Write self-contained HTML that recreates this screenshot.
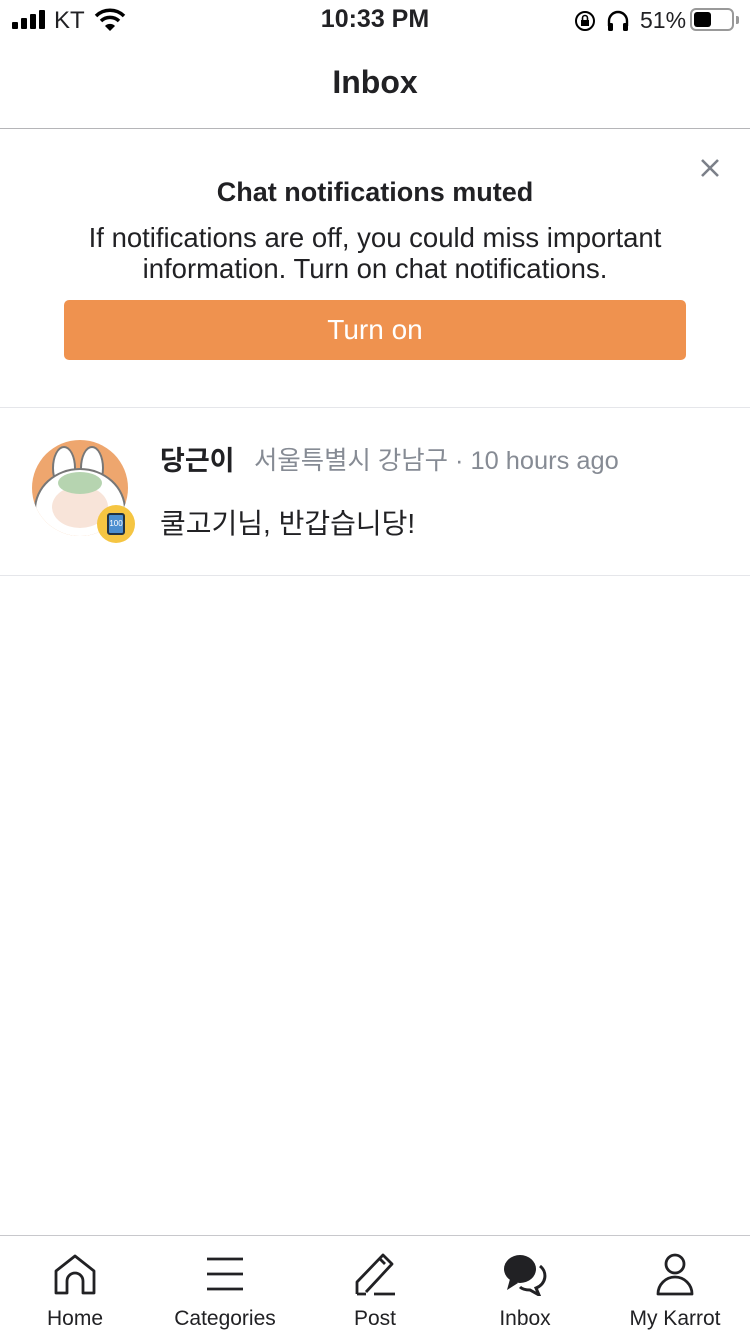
<!DOCTYPE html>
<html><head><meta charset="utf-8"><style>
*{margin:0;padding:0;box-sizing:border-box}
body{width:750px;height:1334px;background:#fff;font-family:"Liberation Sans","Noto Sans CJK KR",sans-serif;color:#212124;position:relative;overflow:hidden}
.abs{position:absolute}
</style></head><body>
<!-- status bar -->
<div class="abs" style="left:12px;top:9px;width:36px;height:22px">
<div class="abs" style="left:0;top:13px;width:6px;height:7px;background:#000;border-radius:1px"></div>
<div class="abs" style="left:9px;top:9px;width:6px;height:11px;background:#000;border-radius:1px"></div>
<div class="abs" style="left:18px;top:5px;width:6px;height:15px;background:#000;border-radius:1px"></div>
<div class="abs" style="left:27px;top:1px;width:6px;height:19px;background:#000;border-radius:1px"></div>
</div>
<div class="abs" style="left:54px;top:7px;font-size:24px">KT</div>
<svg class="abs" style="left:94px;top:8px" width="32" height="24" viewBox="0 0 32 24"><path d="M2 8a20 20 0 0 1 28 0" stroke="#000" stroke-width="3.5" fill="none"/><path d="M7 13a13 13 0 0 1 18 0" stroke="#000" stroke-width="3.5" fill="none"/><path d="M11 18l5 5 5-5a7 7 0 0 0-10 0z" fill="#000"/></svg>
<div class="abs" style="left:0;width:750px;top:5px;text-align:center;font-size:25px;font-weight:bold">10:33 PM</div>
<svg class="abs" style="left:574px;top:10px" width="22" height="22" viewBox="0 0 22 22"><circle cx="11" cy="11" r="9" stroke="#000" stroke-width="2" fill="none"/><rect x="7" y="10" width="8" height="6" fill="#000"/><path d="M8.5 10V8a2.5 2.5 0 0 1 5 0v2" stroke="#000" stroke-width="1.6" fill="none"/></svg>
<svg class="abs" style="left:606px;top:10px" width="24" height="22" viewBox="0 0 24 22"><path d="M3 16v-5a9 9 0 0 1 18 0v5" stroke="#000" stroke-width="2.4" fill="none"/><rect x="2" y="13" width="5" height="8" rx="1.5" fill="#000"/><rect x="17" y="13" width="5" height="8" rx="1.5" fill="#000"/></svg>
<div class="abs" style="left:640px;top:7px;font-size:23px">51%</div>
<div class="abs" style="left:690px;top:8px;width:44px;height:23px;border:2px solid #999;border-radius:6px"><div style="margin:2px;width:17px;height:15px;background:#000;border-radius:3px"></div></div>
<div class="abs" style="left:736px;top:16px;width:3px;height:8px;background:#999;border-radius:0 2px 2px 0"></div>
<!-- header -->
<div class="abs" style="left:0;width:750px;top:64px;text-align:center;font-size:32px;font-weight:bold">Inbox</div>
<div class="abs" style="left:0;top:128px;width:750px;height:1px;background:#b5b5b8"></div>
<!-- banner -->
<svg class="abs" style="left:700px;top:158px" width="20" height="20" viewBox="0 0 20 20"><path d="M2 2l16 16M18 2L2 18" stroke="#7c8089" stroke-width="2.6"/></svg>
<div class="abs" style="left:0;width:750px;top:177px;text-align:center;font-size:27px;font-weight:bold">Chat notifications muted</div>
<div class="abs" style="left:0;width:750px;top:222px;text-align:center;font-size:27.5px;line-height:31px;color:#212124">If notifications are off, you could miss important<br>information. Turn on chat notifications.</div>
<div class="abs" style="left:64px;top:300px;width:622px;height:60px;background:#ef924f;border-radius:5px;color:#fff;font-size:28px;text-align:center;line-height:60px">Turn on</div>
<div class="abs" style="left:0;top:407px;width:750px;height:1px;background:#e5e6ea"></div>
<!-- chat row -->
<div class="abs" style="left:32px;top:440px;width:96px;height:96px;border-radius:50%;background:#eea66e;overflow:hidden">
<div class="abs" style="left:20px;top:6px;width:24px;height:44px;border-radius:50%;background:#fff;border:2px solid #777"></div>
<div class="abs" style="left:48px;top:6px;width:24px;height:44px;border-radius:50%;background:#fff;border:2px solid #777"></div>
<div class="abs" style="left:2px;top:28px;width:92px;height:84px;border-radius:50%;background:#fff;border:2px solid #777"></div>
<div class="abs" style="left:20px;top:46px;width:56px;height:42px;border-radius:50%;background:#f8e4d9"></div>
<div class="abs" style="left:26px;top:32px;width:44px;height:22px;border-radius:50%;background:#b6d4b0"></div>
</div>
<div class="abs" style="left:97px;top:505px;width:38px;height:38px;border-radius:50%;background:#f5c542"><div style="margin:8px 10px;width:18px;height:22px;background:#4c8fd0;border:2px solid #234;border-radius:3px;font-size:8px;color:#fff;text-align:center;line-height:18px">100</div></div>
<div class="abs" style="left:160px;top:439px;font-size:27px;font-weight:bold">당근이</div>
<div class="abs" style="left:254px;top:441px;font-size:25.4px;color:#868b94">서울특별시 강남구 · 10 hours ago</div>
<div class="abs" style="left:160px;top:502px;font-size:28px">쿨고기님, 반갑습니당!</div>
<div class="abs" style="left:0;top:575px;width:750px;height:1px;background:#e5e6ea"></div>
<!-- tab bar -->
<div class="abs" style="left:0;top:1235px;width:750px;height:1px;background:#c8c8cc"></div>
<svg class="abs" style="left:53px;top:1253px" width="44" height="42" viewBox="0 0 44 42"><path d="M3 40V18L22 3l19 15v22H30V28a8 8 0 0 0-16 0v12z" stroke="#212124" stroke-width="2.8" fill="none" stroke-linejoin="round"/></svg>
<svg class="abs" style="left:206px;top:1257px" width="38" height="34" viewBox="0 0 38 34"><path d="M1 2h36M1 17h36M1 32h36" stroke="#212124" stroke-width="2.8"/></svg>
<svg class="abs" style="left:354px;top:1252px" width="42" height="44" viewBox="0 0 42 44"><path d="M3 42V30L29 3l9 9L12 40M3 42h9M20 42h21M26 7l5 5" stroke="#212124" stroke-width="2.8" fill="none" stroke-linejoin="round"/></svg>
<svg class="abs" style="left:502px;top:1252px" width="46" height="44" viewBox="0 0 46 44"><path d="M38 14a14 13 0 0 1-4 22l3 7-9-5c-4 0-8-1-10-3" fill="none" stroke="#212124" stroke-width="3"/><ellipse cx="18" cy="17" rx="16" ry="14" fill="#212124"/><path d="M8 27l-3 11 11-7z" fill="#212124"/></svg>
<svg class="abs" style="left:655px;top:1252px" width="40" height="44" viewBox="0 0 40 44"><circle cx="20" cy="12" r="9" stroke="#212124" stroke-width="2.8" fill="none"/><path d="M3 42a17 17 0 0 1 34 0z" stroke="#212124" stroke-width="2.8" fill="none" stroke-linejoin="round"/></svg>
<div class="abs" style="left:0;width:150px;top:1307px;text-align:center;font-size:21px">Home</div>
<div class="abs" style="left:150px;width:150px;top:1307px;text-align:center;font-size:21px">Categories</div>
<div class="abs" style="left:300px;width:150px;top:1307px;text-align:center;font-size:21px">Post</div>
<div class="abs" style="left:450px;width:150px;top:1307px;text-align:center;font-size:21px">Inbox</div>
<div class="abs" style="left:600px;width:150px;top:1307px;text-align:center;font-size:21px">My Karrot</div>
</body></html>
